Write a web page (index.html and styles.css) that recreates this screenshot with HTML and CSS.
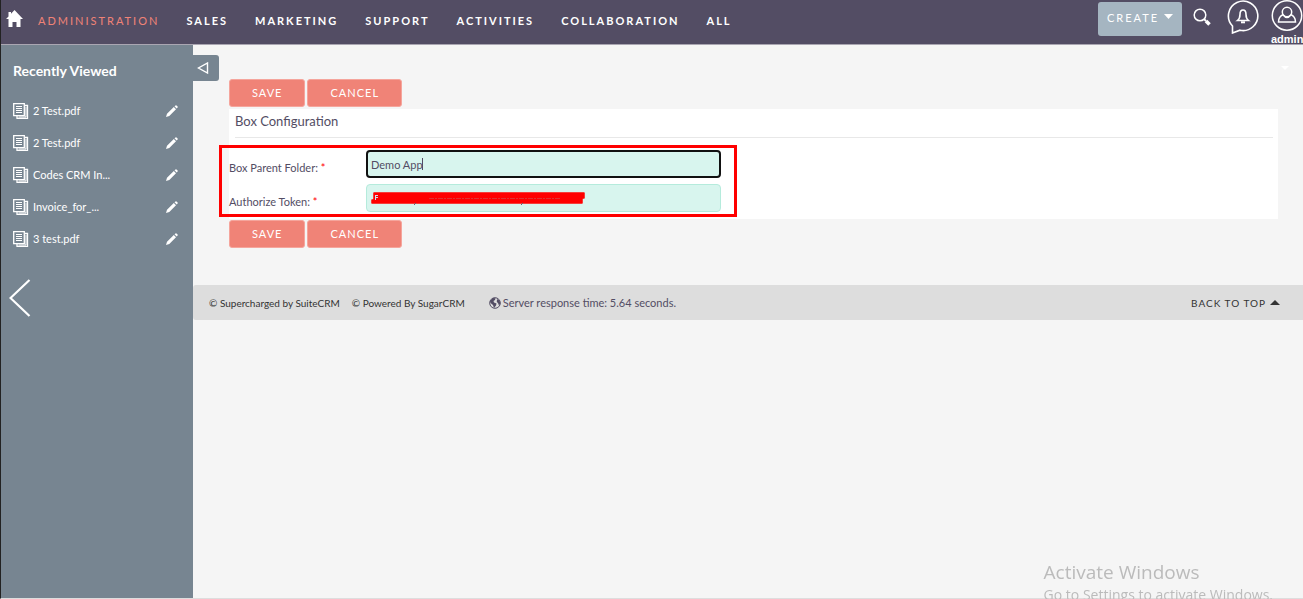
FILE: index.html
```html
<!DOCTYPE html>
<html lang="en">
<head>
<meta charset="utf-8">
<title>Box Configuration</title>
<link rel="stylesheet" href="styles.css">
</head>
<body>
<svg class="sprite" aria-hidden="true">
  <symbol id="doc" viewBox="0 0 16 16">
    <path d="M12 2.500h2.500v13H4V13" fill="none" stroke="currentColor" stroke-width="1.300"/>
    <path d="M.700.700h10.600v12H.700z" fill="none" stroke="currentColor" stroke-width="1.300"/>
    <path d="M3 3.500h6M3 5.500h6M3 7.500h6M3 9.500h6M13 4v10H5.500" fill="none" stroke="currentColor" stroke-width="1"/>
  </symbol>
  <symbol id="pencil" viewBox="0 0 12 12">
    <path d="M0 12l1-3.300L7.800 2l2.200 2.200L3.300 11zM8.500 1.300l1-.9q.5-.4 1 0l1.100 1.100q.4.500 0 1l-.9 1z" fill="currentColor"/>
  </symbol>
</svg>
<header class="topbar">
  <a class="home" href="#" aria-label="Home">
    <svg width="17" height="18" viewBox="0 0 17 18"><path d="M8.500 0L17 9h-2.500v8h-4v-5h-4v5h-4V9H0L2.500 6.500V2h2.500v1.700z" fill="currentColor"/></svg>
  </a>
  <nav class="menu">
    <a class="current" href="#">ADMINISTRATION</a>
    <a href="#">SALES</a>
    <a href="#">MARKETING</a>
    <a href="#">SUPPORT</a>
    <a href="#">ACTIVITIES</a>
    <a href="#">COLLABORATION</a>
    <a href="#">ALL</a>
  </nav>
  <div class="tools">
    <button class="create" type="button">CREATE <svg width="9" height="5" viewBox="0 0 9 5"><path d="M0 0h9L4.500 5z" fill="currentColor"/></svg></button>
    <button class="icon search" type="button" aria-label="Search">
      <svg width="18" height="18" viewBox="0 0 18 18" fill="none" stroke="currentColor"><circle cx="7" cy="7" r="5.800" stroke-width="1.500"/><path d="M11 11l2 2" stroke-width="1.800"/><path d="M13 13l3.500 3.500" stroke-width="3.600"/></svg>
    </button>
    <button class="icon alerts" type="button" aria-label="Notifications">
      <svg width="32" height="34" viewBox="0 0 32 34" fill="none" stroke="currentColor" stroke-width="1.600"><path d="M5.500 26A14.700 14.700 0 1 1 13 30.200L5.500 33z"/><path d="M10.500 20.500q2.500-2 2.500-6 0-4.500 3-4.500t3 4.500q0 4 2.500 6z" stroke-width="1.600"/><path d="M14 22.300h4" stroke-width="2"/></svg>
    </button>
    <button class="icon user" type="button">
      <svg width="32" height="32" viewBox="0 0 32 32" fill="none" stroke="currentColor" stroke-width="1.500"><circle cx="16" cy="15.500" r="14.700"/><circle cx="16" cy="12" r="4.700"/><path d="M12.500 14.500q-5 2-5 7.500h17q0-5.500-5-7.500M12.300 15q3.700 5 7.400 0"/></svg>
      <span>admin</span>
    </button>
  </div>
</header>
<div class="body">
  <aside class="sidebar">
    <h2>Recently Viewed</h2>
    <ul class="recent">
      <li><svg class="doc"><use href="#doc"/></svg><a href="#">2 Test.pdf</a><button class="icon" type="button" aria-label="Edit"><svg class="pencil"><use href="#pencil"/></svg></button></li>
      <li><svg class="doc"><use href="#doc"/></svg><a href="#">2 Test.pdf</a><button class="icon" type="button" aria-label="Edit"><svg class="pencil"><use href="#pencil"/></svg></button></li>
      <li><svg class="doc"><use href="#doc"/></svg><a href="#">Codes CRM In...</a><button class="icon" type="button" aria-label="Edit"><svg class="pencil"><use href="#pencil"/></svg></button></li>
      <li><svg class="doc"><use href="#doc"/></svg><a href="#">Invoice_for_...</a><button class="icon" type="button" aria-label="Edit"><svg class="pencil"><use href="#pencil"/></svg></button></li>
      <li><svg class="doc"><use href="#doc"/></svg><a href="#">3 test.pdf</a><button class="icon" type="button" aria-label="Edit"><svg class="pencil"><use href="#pencil"/></svg></button></li>
    </ul>
    <button class="icon previous" type="button" aria-label="Previous"><svg width="22" height="38" viewBox="0 0 22 38"><path d="M20.500 1L1.500 19l19 18" fill="none" stroke="currentColor" stroke-width="2.200"/></svg></button>
  </aside>
  <main class="main">
    <button class="toggle" type="button" aria-label="Collapse sidebar"><svg width="12" height="12" viewBox="0 0 12 12"><path d="M10.500 1v10L1.500 6z" fill="none" stroke="currentColor" stroke-width="1.400"/></svg></button>
    <svg class="caret" width="8" height="4" viewBox="0 0 8 4"><path d="M0 0h8L4 4z" fill="currentColor"/></svg>
    <form class="config">
      <div class="actions"><button type="button">SAVE</button><button type="button">CANCEL</button></div>
      <section class="panel">
        <h1>Box Configuration</h1>
        <div class="fields">
          <div class="field">
            <label for="folder">Box Parent Folder: <span class="required">*</span></label>
            <div class="control"><input class="active" id="folder" type="text" value="Demo App"><span class="cursor"></span></div>
          </div>
          <div class="field">
            <label for="token">Authorize Token: <span class="required">*</span></label>
            <div class="control"><input id="token" type="text">
              <svg class="redaction" width="214" height="14" viewBox="0 0 214 14"><path d="M3 1h210v5h-2v5H1V8h2z" fill="#f00" stroke="#f00" stroke-width="1.500" stroke-linejoin="round"/><path d="M4 3.500h3M4.500 3v5M5 5.500h2" stroke="#cde" fill="none"/><path d="M58 6.500h132" stroke="#d33" stroke-dasharray="5 1 2 1"/><path d="M45 11l-2 2M152 11l-2 2" stroke="#667"/></svg>
            </div>
          </div>
        </div>
        <div class="highlight"></div>
      </section>
      <div class="actions"><button type="button">SAVE</button><button type="button">CANCEL</button></div>
    </form>
    <footer class="footer">
      <a class="credit" href="#">© Supercharged by SuiteCRM</a>
      <a class="credit" href="#">© Powered By SugarCRM</a>
      <span class="response"><svg width="12" height="12" viewBox="0 0 12 12"><circle cx="6" cy="6" r="5.300" fill="none" stroke="currentColor"/><path d="M1 4l3-3 2.500.3L6 3 4.500 4l.5 1.500L7.500 6.500 7 8.500 5 11 4 8 1.500 6zM8 2l2.500 1.500.8 3-1.300 2L9 6 7.800 5z" fill="currentColor"/></svg>Server response time: 5.64 seconds.</span>
      <a class="top" href="#">BACK TO TOP <svg width="10" height="5" viewBox="0 0 10 5"><path d="M0 5h10L5 0z" fill="currentColor"/></svg></a>
    </footer>
  </main>
</div>
<div class="watermark"><strong>Activate Windows</strong><span>Go to Settings to activate Windows.</span></div>
</body>
</html>
```
FILE: styles.css
```css
* { box-sizing: border-box; }
body {
  margin: 0;
  min-height: 100vh;
  display: flex;
  flex-direction: column;
  overflow: hidden;
  background: #f5f5f5;
  border-left: 1px solid #222;
  border-bottom: 1px solid #ddd;
  color: #534d64;
  font: 11px/16px Lato, sans-serif;
}
a { color: inherit; text-decoration: none; }
button, input { font: inherit; color: inherit; }
svg { display: block; }
.sprite { position: absolute; width: 0; height: 0; }
.icon { padding: 0; border: 0; background: none; }

.topbar {
  display: flex;
  align-items: flex-start;
  height: 45px;
  padding-left: 5px;
  background: #534d64;
  border-bottom: 1px solid #aaa6b2;
  color: #fff;
}
.home { margin: 10px 15px 0 0; }
.menu {
  display: flex;
  gap: 27px;
  padding-top: 13px;
  font-weight: 700;
  letter-spacing: 2px;
}
.menu .current { color: #f08377; font-weight: 400; }
.tools { display: flex; align-items: flex-start; margin-left: auto; }
.create {
  display: flex;
  gap: 5px;
  width: 84px;
  height: 34px;
  margin: 2px 11px 0 0;
  padding: 8px 0 0 9px;
  border: 0;
  border-radius: 3px;
  background: #a5b5c1;
  letter-spacing: 2px;
}
.create svg { margin-top: 4px; }
.search { margin: 8px 16px 0 0; }
.alerts { margin-right: 12px; }
.user { width: 32px; font: 700 11px/14px "Liberation Sans", sans-serif; }

.body { display: flex; flex: 1; }
.sidebar {
  flex: 0 0 192px;
  padding: 16px 15px 0 12px;
  background: #778591;
  color: #fff;
}
.sidebar h2 { margin: 0 0 22px; font-size: 14px; line-height: 20px; }
.recent { margin: 0; padding: 0; list-style: none; }
.recent li { display: flex; align-items: center; height: 16px; margin-bottom: 16px; }
.doc { width: 16px; height: 16px; }
.recent a { margin: 0 auto 0 4px; }
.pencil { width: 12px; height: 12px; }
.previous { margin: 16px 0 0 -4px; }

.main { position: relative; flex: 1; padding-top: 34px; }
.toggle {
  position: absolute;
  left: 0;
  top: 10px;
  width: 26px;
  height: 26px;
  padding: 0 0 0 4px;
  border: 0;
  border-radius: 0 3px 3px 0;
  background: #778591;
  color: #fff;
}
.caret { position: absolute; right: 14px; top: 21px; color: #fff; }
.config { margin: 0 25px 37px 36px; }
.actions { display: flex; gap: 2px; }
.actions button {
  height: 28px;
  padding: 0 22px;
  border: 1px solid #f5a59c;
  border-radius: 3px;
  background: #f08377;
  color: #fff;
  font-size: 11px;
  letter-spacing: 1px;
}
.panel { position: relative; margin: 2px 0 1px; padding-bottom: 7px; background: #fff; }
.panel h1 {
  margin: 0 5px 12px 6px;
  padding-bottom: 4px;
  border-bottom: 1px solid #e8e8e8;
  font-size: 13px;
  font-weight: 400;
  line-height: 24px;
}
.fields { display: grid; gap: 6px; }
.field { display: flex; }
.field label { width: 137px; padding-top: 10px; }
.required { color: #f00; }
.control { position: relative; width: 355px; }
.control input {
  display: block;
  width: 100%;
  height: 28px;
  padding: 0 4px;
  border: 1px solid #b5ebdc;
  border-radius: 4px;
  background: #d8f5ee;
}
.control .active { padding: 0 3px; border: 2px solid #111; }
.cursor { position: absolute; left: 56px; top: 8px; width: 1px; height: 12px; background: #534d64; }
.redaction { position: absolute; left: 5px; top: 8px; }
.highlight { position: absolute; left: -10px; top: 36px; width: 518px; height: 72px; border: 3px solid #f00; pointer-events: none; }

.footer {
  display: flex;
  align-items: center;
  gap: 12px;
  height: 35px;
  padding: 0 23px 0 16px;
  border-radius: 3px 0 0 3px;
  background: #ddd;
  color: #333;
}
.credit, .top { font-size: 10px; }
.response { display: flex; align-items: center; gap: 2px; margin-left: 12px; color: #534d64; }
.top { display: flex; align-items: center; gap: 4px; margin-left: auto; letter-spacing: 1px; }

.watermark {
  position: fixed;
  right: 30px;
  bottom: -6px;
  display: flex;
  flex-direction: column;
  color: #bbb;
  font: 14px/20px "Open Sans", sans-serif;
}
.watermark strong { font-size: 19px; font-weight: 400; line-height: 26px; }
```
